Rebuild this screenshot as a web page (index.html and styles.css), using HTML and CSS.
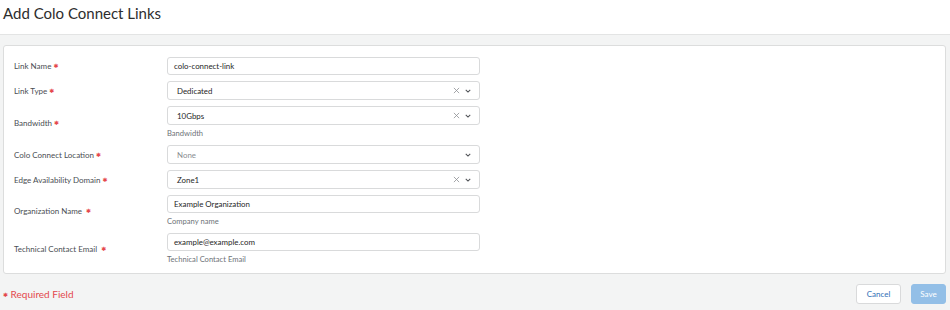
FILE: index.html
```html
<!DOCTYPE html>
<html lang="en">
<head>
<meta charset="utf-8">
<title>Add Colo Connect Links</title>
<link rel="stylesheet" href="styles.css">
</head>
<body>
<header class="page-header">
  <h1 class="title">Add Colo Connect Links</h1>
</header>
<main class="page-body">
  <section class="card">
    <div class="row">
      <label class="label">Link Name <span class="req">✱</span></label>
      <div class="field"><div class="input">colo-connect-link</div></div>
    </div>
    <div class="row">
      <label class="label">Link Type <span class="req">✱</span></label>
      <div class="field">
        <div class="select"><span class="value">Dedicated</span>
          <svg class="clear" viewBox="0 0 8 8"><path d="M1 1L7 7M7 1L1 7"/></svg>
          <svg class="chev" viewBox="0 0 8 5"><path d="M1 1L4 4L7 1"/></svg>
        </div>
      </div>
    </div>
    <div class="row">
      <label class="label">Bandwidth <span class="req">✱</span></label>
      <div class="field">
        <div class="select"><span class="value">10Gbps</span>
          <svg class="clear" viewBox="0 0 8 8"><path d="M1 1L7 7M7 1L1 7"/></svg>
          <svg class="chev" viewBox="0 0 8 5"><path d="M1 1L4 4L7 1"/></svg>
        </div>
        <div class="help">Bandwidth</div>
      </div>
    </div>
    <div class="row">
      <label class="label">Colo Connect Location <span class="req">✱</span></label>
      <div class="field">
        <div class="select"><span class="value placeholder">None</span>
          <svg class="chev" viewBox="0 0 8 5"><path d="M1 1L4 4L7 1"/></svg>
        </div>
      </div>
    </div>
    <div class="row">
      <label class="label">Edge Availability Domain <span class="req">✱</span></label>
      <div class="field">
        <div class="select"><span class="value">Zone1</span>
          <svg class="clear" viewBox="0 0 8 8"><path d="M1 1L7 7M7 1L1 7"/></svg>
          <svg class="chev" viewBox="0 0 8 5"><path d="M1 1L4 4L7 1"/></svg>
        </div>
      </div>
    </div>
    <div class="row">
      <label class="label">Organization Name &nbsp;<span class="req">✱</span></label>
      <div class="field">
        <div class="input">Example Organization</div>
        <div class="help">Company name</div>
      </div>
    </div>
    <div class="row">
      <label class="label">Technical Contact Email &nbsp;<span class="req">✱</span></label>
      <div class="field">
        <div class="input">example@example.com</div>
        <div class="help">Technical Contact Email</div>
      </div>
    </div>
  </section>
  <footer class="footer">
    <div class="required-note"><span class="req-star">✱</span> Required Field</div>
    <div class="actions">
      <button class="btn btn-cancel">Cancel</button>
      <button class="btn btn-save">Save</button>
    </div>
  </footer>
</main>
</body>
</html>
```

FILE: styles.css
```css
html, body {
  margin: 0;
  padding: 0;
  height: 100%;
}
body {
  font-family: Lato, "Liberation Sans", sans-serif;
  background: #f3f4f4;
  color: #333;
}
.page-header {
  background: #fff;
  height: 34px;
  border-bottom: 1px solid #e3e4e4;
  box-sizing: content-box;
}
.title {
  margin: 0;
  padding: 3px 0 0 3px;
  font-size: 15px;
  font-weight: 400;
  line-height: 20px;
  color: #2d2d2d;
}
.page-body {
  padding: 10px 4px 0 3px;
}
.card {
  background: #fff;
  border: 1px solid #dcdddd;
  border-radius: 3px;
  padding: 11px 0 9px 9px;
  display: flex;
  flex-direction: column;
  gap: 6px;
  height: 207px;
  box-sizing: content-box;
}
.row {
  display: grid;
  grid-template-columns: 154px 313px;
  align-items: center;
}
.label {
  font-size: 8px;
  color: #4a4e53;
  padding-left: 1px;
}
.req {
  color: #e5484d;
  font-family: "DejaVu Sans", sans-serif;
  font-size: 6px;
  line-height: 0;
  vertical-align: 1px;
}
.field {
  display: flex;
  flex-direction: column;
}
.input, .select {
  box-sizing: border-box;
  border: 1px solid #d9dadb;
  border-radius: 3px;
  font-size: 7.9px;
  color: #262626;
  display: flex;
  align-items: center;
}
.input {
  height: 18px;
  padding-left: 6px;
}
.select {
  height: 19px;
  padding: 0 8px 0 9px;
}
.value {
  flex: 1;
}
.placeholder {
  color: #8a8d91;
}
.clear {
  width: 7px;
  height: 7px;
  margin-right: 5px;
  fill: none;
  stroke: #8c8f93;
  stroke-width: 0.9;
}
.chev {
  width: 6px;
  height: 4px;
  fill: none;
  stroke: #505357;
  stroke-width: 1.4;
}
.help {
  font-size: 7.6px;
  color: #6e7378;
  line-height: 12px;
  margin-top: 2px;
}
.footer {
  display: flex;
  justify-content: space-between;
  align-items: center;
  padding-top: 10px;
}
.required-note {
  color: #e3474c;
  font-size: 10px;
}
.req-star {
  font-family: "DejaVu Sans", sans-serif;
  font-size: 6px;
  line-height: 0;
  vertical-align: 1px;
}
.actions {
  display: flex;
  gap: 10px;
}
.btn {
  font-family: Lato, "Liberation Sans", sans-serif;
  font-size: 8px;
  height: 20px;
  border-radius: 3px;
  padding: 0;
}
.btn-cancel {
  width: 45px;
  background: #fff;
  border: 1px solid #d9dadb;
  color: #2f6fb5;
}
.btn-save {
  width: 35px;
  background: #93bfe7;
  border: 1px solid #93bfe7;
  color: #fff;
}
```
